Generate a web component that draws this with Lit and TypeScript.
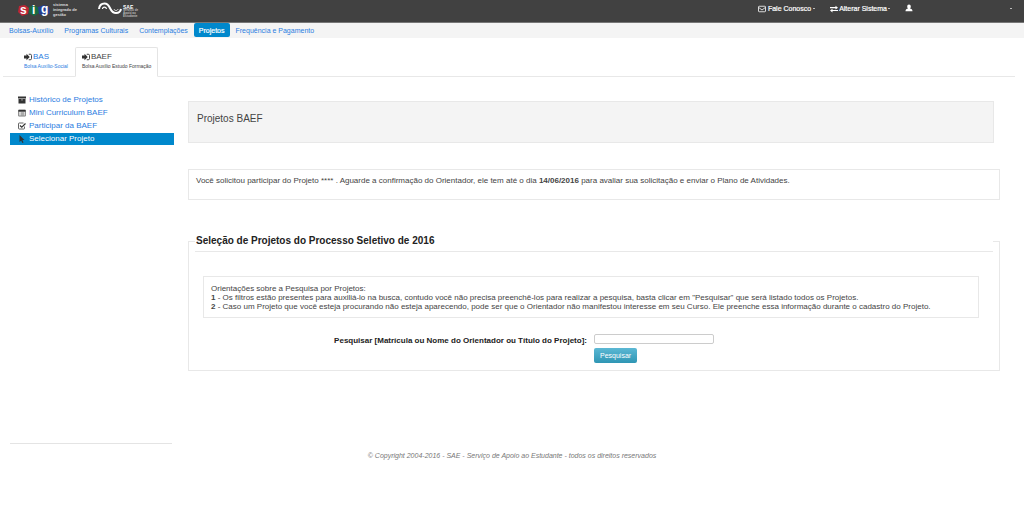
import { LitElement, html, svg, css } from "lit";
import { customElement, property } from "lit/decorators.js";

const glyphs: Record<string, unknown> = {
  mail: svg`<rect x="1" y="2.5" width="14" height="11" rx="1.5" fill="none" stroke="currentColor" stroke-width="1.6"/><path d="M1.5 5l6.5 5 6.5-5" fill="none" stroke="currentColor" stroke-width="1.6"/>`,
  swap: svg`<path d="M0 4.2h11V1.5L16 5.3l-5 3.5V6.4H0zM16 9.8H5V7.5L0 11.2l5 3.6v-2.6h11z" fill="currentColor"/>`,
  user: svg`<path d="M8 1a3.6 3.6 0 0 1 3.6 3.8c0 2-.8 3.500-1.800 4.200C12.700 9.600 15 11 15 14.500H1C1 11 3.300 9.600 6.200 9 5.200 8.300 4.400 6.800 4.400 4.800A3.600 3.600 0 0 1 8 1z" fill="currentColor"/>`,
  signin: svg`<path d="M0 5h5V1.500l6.500 6.500-6.500 6.500V11H0z" fill="currentColor"/><path d="M9.500 2.500h3A2.500 2.500 0 0 1 15 5v6a2.500 2.500 0 0 1-2.500 2.500h-3" fill="none" stroke="currentColor" stroke-width="1.800"/>`,
  archive: svg`<path d="M0 1h16v4H0zM1 6h14v9H1z" fill="currentColor"/><path d="M6 7.800h4" stroke="#fff" stroke-width="1"/>`,
  card: svg`<rect x=".7" y="2" width="14.600" height="12" rx="1" fill="none" stroke="currentColor" stroke-width="1.300"/><path d="M1 2h14v3.500H1z" fill="currentColor"/><path d="M3 7.500h2m1 0h7M3 9.700h2m1 0h7M3 11.900h2m1 0h7" stroke="currentColor"/>`,
  check: svg`<path d="M13 9v3.500a1.500 1.500 0 0 1-1.500 1.500h-9A1.500 1.500 0 0 1 1 12.500v-9A1.500 1.500 0 0 1 2.500 2H11" fill="none" stroke="currentColor" stroke-width="1.500"/><path d="M4 7l3.500 3.500L15 3" fill="none" stroke="currentColor" stroke-width="2.400"/>`,
  pointer: svg`<path d="M3 0l10 9.800H8.700l2.400 5-2.300 1.100-2.400-5.100L3 14z" fill="currentColor"/>`,
};

@customElement("sig-icon")
class SigIcon extends LitElement {
  @property() name = "mail";
  static styles = css`
    :host { display: inline-flex; flex: none; width: 8px; height: 8px; }
    svg { width: 100%; height: 100%; }
  `;
  render() {
    return html`<svg viewBox="0 0 16 16" aria-hidden="true">${glyphs[this.name]}</svg>`;
  }
}

@customElement("app-root")
class AppRoot extends LitElement {
  static styles = css`
    :host {
      display: block;
      font: 8px/9px "Liberation Sans", Arial, sans-serif;
      color: #444;
      background: #fff;
    }
    *, *::before { box-sizing: border-box; }
    a { color: #2b7de1; text-decoration: none; }
    ul { list-style: none; margin: 0; padding: 0; }
    .top {
      display: flex;
      height: 23px;
      padding: 0 12px 0 18px;
      background: #414141;
      border-bottom: 1px solid #777;
      color: #fff;
    }
    .brand { display: flex; gap: 21px; }
    .logo { display: flex; align-items: flex-start; gap: 3px; }
    .mark { width: 32px; height: 16px; margin-top: 3px; overflow: visible; }
    .wave { width: 24px; height: 14px; margin-top: 1px; }
    .mark text { font: bold 12px "Liberation Sans", sans-serif; fill: #fff; }
    .tag { font: bold 4px/5px "Liberation Sans", sans-serif; margin-top: 2px; color: #ddd; }
    .sae { gap: 1px; }
    .sae .tag { font: bold 3px/3px "Liberation Sans", sans-serif; margin-top: 5px; color: #bbb; }
    .tag strong { display: block; font-size: 5px; line-height: 4px; color: #fff; }
    .tools { display: flex; align-items: flex-start; gap: 15px; margin-left: auto; padding-top: 4px; }
    .tool {
      display: flex;
      align-items: center;
      gap: 2px;
      padding: 0;
      border: 0;
      background: none;
      font: 7px/9px "Liberation Sans", sans-serif;
      color: #fff;
      -webkit-text-stroke: 0.2px #fff;
    }
    .swap { gap: 1px; }
    .caret { width: 2px; height: 1px; background: #bbb; }
    .account { width: 107px; justify-content: space-between; }
    .nav { background: #f4f4f4; font-size: 7px; }
    .nav ul { display: flex; gap: 1px; height: 15px; padding: 0 4px; }
    .nav a { display: block; padding: 3px 5px 2px; border-radius: 2px; }
    .nav .on { background: #0088cc; color: #fff; -webkit-text-stroke: 0.2px #fff; }
    .tabs { display: flex; margin: 9px 9px 0 3px; padding-left: 14px; border-bottom: 1px solid #e8e8e8; }
    .tab { display: block; padding: 4px 6px 4px; border: 1px solid transparent; font-size: 5px; line-height: 9px; }
    .tab b { display: flex; gap: 1px; font: 8px/10px "Liberation Sans", sans-serif; }
    .tab sig-icon { color: #333; margin-top: 1px; }
    .tab.on { color: #444; border: 1px solid #e4e4e4; border-bottom-color: #fff; margin-bottom: -1px; border-radius: 2px 2px 0 0; }
    .body { display: grid; grid-template-columns: 164px minmax(0, 1fr); gap: 14px; padding: 17px 24px 0 10px; }
    .side { display: flex; flex-direction: column; justify-content: space-between; height: 350px; }
    .side a { display: flex; align-items: center; gap: 3px; margin-bottom: 1px; padding: 0 8px; line-height: 12px; }
    .side sig-icon { color: #333; }
    .side .on { background: #0088cc; color: #fff; }
    .side hr { width: 162px; margin: 0; border: 0; border-top: 1px solid #e4e4e4; }
    .title { margin: 7px 6px 26px 0; padding: 11px 8px 18px; border: 1px solid #e8e8e8; background: #f4f4f4; font: 10px/11px "Liberation Sans", sans-serif; }
    .note { margin: 0 0 31px; padding: 6px 7px 14px; border: 1px solid #e8e8e8; }
    fieldset { margin: 0; padding: 0 6px 7px; border: 1px solid #e8e8e8; min-width: 0; }
    legend { width: 100%; padding: 4px 0 5px 1px; border-bottom: 1px solid #e8e8e8; font: bold 10px/11px "Liberation Sans", sans-serif; color: #222; }
    .hints { margin: 24px 14px 16px 8px; padding: 7px 7px 6px; border: 1px solid #e8e8e8; }
    .hints p { margin: 0; }
    .search { display: grid; grid-template-columns: 392px 1fr; column-gap: 7px; row-gap: 4px; }
    label { text-align: right; font-weight: bold; line-height: 10px; padding-top: 2px; height: 10px; color: #222; }
    input { width: 120px; height: 10px; padding: 0 2px; border: 1px solid #ccc; border-radius: 2px; font: 7px "Liberation Sans", sans-serif; }
    .go {
      grid-column: 2;
      justify-self: start;
      padding: 3px 6px;
      border: 0;
      border-radius: 2px;
      background: linear-gradient(#5bb8d4, #2f96b4);
      color: #fff;
      font: 7px/9px "Liberation Sans", sans-serif;
    }
    footer { padding: 7px 0; text-align: center; font-size: 7px; font-style: italic; color: #777; }
  `;

  private side = [
    ["archive", "Histórico de Projetos"],
    ["card", "Mini Curriculum BAEF"],
    ["check", "Participar da BAEF"],
    ["pointer", "Selecionar Projeto"],
  ];
  private areas = ["Bolsas-Auxílio", "Programas Culturais", "Contemplações", "Projetos", "Frequência e Pagamento"];

  render() {
    return html`
      <header class="top">
        <div class="brand">
          <div class="logo">
            <svg class="mark" viewBox="0 0 32 16" role="img" aria-label="sig">
              <path d="M1 3l6-1 4 3-1 6-6 2-4-4z" fill="#bd2635"/>
              <path d="M11 4l5-2 5 3v5l-5 3-5-3z" fill="#176b43"/>
              <path d="M20 4l6-2 5 2 1 6-5 3-6-2z" fill="#263f91"/>
              <text x="2" y="11">s</text><text x="14" y="11">i</text><text x="23" y="10">g</text>
            </svg>
            <span class="tag">sistema<br />integrado de<br />gestão</span>
          </div>
          <div class="logo sae">
            <svg class="wave" viewBox="0 0 24 14" fill="none" stroke="#fff" aria-hidden="true">
              <path d="M1 8C1.500 4 4 2.500 6.500 2.500 10 2.500 11 5 12.500 8c1.500 3 3 4 5.500 4 2.500 0 4.500-1.500 5-4" stroke-width="2"/>
              <path d="M4.500 8c0-2.500 3.500-2.500 4 0" stroke-width="1.200"/>
              <path d="M16 8c.5 2 3.500 2 4 0" stroke-width=".8"/>
            </svg>
            <span class="tag"><strong>SAE</strong>Serviço de<br />Apoio ao<br />Estudante</span>
          </div>
        </div>
        <div class="tools">
          <button class="tool"><sig-icon name="mail"></sig-icon>Fale Conosco<span class="caret"></span></button>
          <button class="tool swap"><sig-icon name="swap"></sig-icon>Alterar Sistema<span class="caret"></span></button>
          <button class="tool account" aria-label="Conta"><sig-icon name="user"></sig-icon><span class="caret"></span></button>
        </div>
      </header>
      <nav class="nav">
        <ul>
          ${this.areas.map((a) => html`<li><a href="#" class=${a === "Projetos" ? "on" : ""}>${a}</a></li>`)}
        </ul>
      </nav>
      <nav class="tabs">
        <a class="tab" href="#"><b><sig-icon name="signin"></sig-icon>BAS</b>Bolsa Auxílio-Social</a>
        <a class="tab on" href="#"><b><sig-icon name="signin"></sig-icon>BAEF</b>Bolsa Auxílio Estudo Formação</a>
      </nav>
      <div class="body">
        <aside class="side">
          <ul>
            ${this.side.map(([icon, text], i) => html`<li><a href="#" class=${i === 3 ? "on" : ""}><sig-icon name=${icon}></sig-icon>${text}</a></li>`)}
          </ul>
          <hr />
        </aside>
        <main>
          <h1 class="title">Projetos BAEF</h1>
          <p class="note">Você solicitou participar do Projeto **** . Aguarde a confirmação do Orientador, ele tem até o dia <strong>14/06/2016</strong> para avaliar sua solicitação e enviar o Plano de Atividades.</p>
          <form @submit=${(e: Event) => e.preventDefault()}>
            <fieldset>
              <legend>Seleção de Projetos do Processo Seletivo de 2016</legend>
              <div class="hints">
                <p>Orientações sobre a Pesquisa por Projetos:</p>
                <p><strong>1</strong> - Os filtros estão presentes para auxiliá-lo na busca, contudo você não precisa preenchê-los para realizar a pesquisa, basta clicar em "Pesquisar" que será listado todos os Projetos.</p>
                <p><strong>2</strong> - Caso um Projeto que você esteja procurando não esteja aparecendo, pode ser que o Orientador não manifestou interesse em seu Curso. Ele preenche essa informação durante o cadastro do Projeto.</p>
              </div>
              <div class="search">
                <label for="q">Pesquisar [Matrícula ou Nome do Orientador ou Título do Projeto]:</label>
                <input id="q" type="text" />
                <button class="go">Pesquisar</button>
              </div>
            </fieldset>
          </form>
        </main>
      </div>
      <footer>© Copyright 2004-2016 - SAE - Serviço de Apoio ao Estudante - todos os direitos reservados</footer>
    `;
  }
}
